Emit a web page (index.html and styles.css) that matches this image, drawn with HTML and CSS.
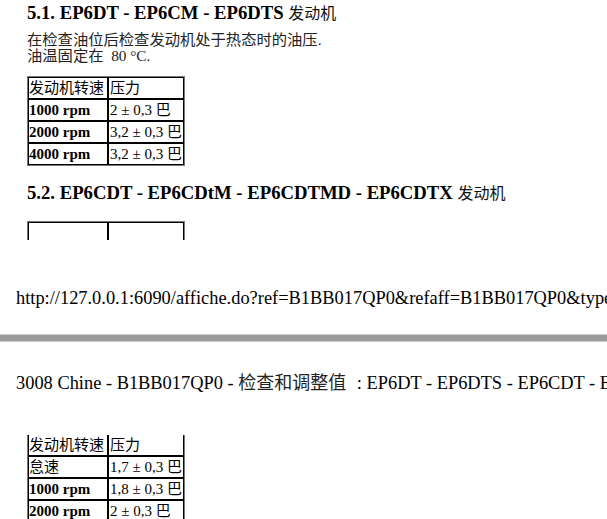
FILE: index.html
```html
<!DOCTYPE html>
<html>
<head>
<meta charset="utf-8">
<link rel="stylesheet" href="styles.css">
</head>
<body>
<div class="sheet">
  <h2 class="title">5.1. EP6DT - EP6CM - EP6DTS <span class="cjk">发动机</span></h2>
  <p class="note">在检查油位后检查发动机处于热态时的油压.<br>油温固定在&nbsp; 80 °C.</p>
  <table class="grid">
    <tr><td class="c1">发动机转速</td><td class="c2">压力</td></tr>
    <tr><td class="c1 b">1000 rpm</td><td class="c2">2 ± 0,3 巴</td></tr>
    <tr><td class="c1 b">2000 rpm</td><td class="c2">3,2 ± 0,3 巴</td></tr>
    <tr><td class="c1 b">4000 rpm</td><td class="c2">3,2 ± 0,3 巴</td></tr>
  </table>
  <h2 class="title t2">5.2. EP6CDT - EP6CDtM - EP6CDTMD - EP6CDTX <span class="cjk">发动机</span></h2>
  <table class="grid">
    <tr><td class="c1"></td><td class="c2"></td></tr>
  </table>
</div>
<div class="footer">http://127.0.0.1:6090/affiche.do?ref=B1BB017QP0&amp;refaff=B1BB017QP0&amp;type=document&amp;lang=zh</div>
<div class="separator"></div>
<div class="pagehead">3008 Chine - B1BB017QP0 - <span class="cjk">检查和调整值</span> : EP6DT - EP6DTS - EP6CDT - EP6CDTX</div>
<div class="sheet2">
  <table class="grid cont">
    <tr><td class="c1">发动机转速</td><td class="c2">压力</td></tr>
    <tr><td class="c1">怠速</td><td class="c2">1,7 ± 0,3 巴</td></tr>
    <tr><td class="c1 b">1000 rpm</td><td class="c2">1,8 ± 0,3 巴</td></tr>
    <tr><td class="c1 b">2000 rpm</td><td class="c2">2 ± 0,3 巴</td></tr>
  </table>
</div>
</body>
</html>
```
FILE: styles.css
```css
html, body {
  margin: 0;
  padding: 0;
  background: #fff;
  color: #000;
  font-family: "Liberation Serif", "Noto Sans CJK SC", serif;
  overflow: hidden;
}
.cjk {
  font-family: "Noto Sans CJK SC", sans-serif;
  font-weight: normal;
  color: #222;
}
.sheet {
  height: 240px;
  overflow: hidden;
  padding: 0 27px;
}
.title {
  margin: 0;
  padding-top: 2px;
  font-size: 18.7px;
  line-height: 20px;
  font-weight: bold;
  white-space: nowrap;
}
.title .cjk {
  font-size: 16px;
  color: #111;
}
.t2 {
  padding-top: 16px;
  margin-bottom: 18px;
}
.note {
  margin: 9px 0 12px;
  font-size: 15.3px;
  line-height: 16px;
  color: #222;
  white-space: nowrap;
}
.grid {
  border-collapse: separate;
  border-spacing: 0;
  border: 1px solid #777;
  width: 158px;
}
.grid td {
  border: 1px solid #000;
  padding: 0;
  height: 20px;
  font-size: 15px;
  line-height: 18px;
  white-space: nowrap;
}
.grid td.c1 { width: 78px; }
.grid td.c2 { padding-left: 1px; }
.grid td.b { font-weight: bold; }
.footer {
  margin-top: 48px;
  padding-left: 16px;
  font-size: 18.4px;
  line-height: 20px;
  white-space: nowrap;
  overflow: hidden;
}
.separator {
  margin-top: 26px;
  height: 6px;
  background: #999;
  border-top: 1px solid #ccc;
  border-bottom: 1px solid #ccc;
}
.pagehead {
  margin-top: 29px;
  padding-left: 16px;
  font-size: 18.4px;
  line-height: 20px;
  white-space: nowrap;
  overflow: hidden;
}
.pagehead .cjk {
  font-size: 18px;
  padding-right: 6px;
}
.sheet2 {
  padding: 42px 27px 0;
}
.grid.cont {
  border-top: 0;
}
.grid.cont tr:first-child td {
  border-top: 0;
}
```
